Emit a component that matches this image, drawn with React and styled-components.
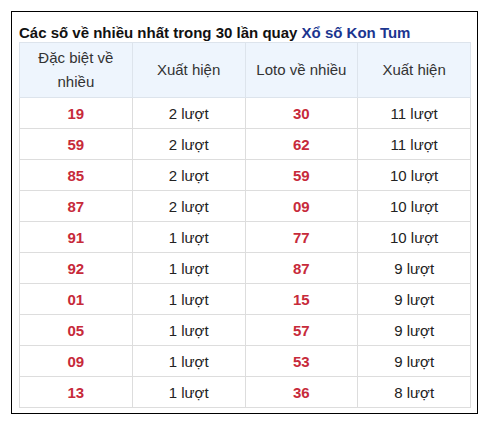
import React from "react";
import styled, { createGlobalStyle } from "styled-components";

const GlobalStyle = createGlobalStyle`
  body {
    margin: 0;
    background: #fff;
    font-family: "Liberation Sans", Arial, sans-serif;
  }
`;

const rows = [
  ["19", "2 lượt", "30", "11 lượt"],
  ["59", "2 lượt", "62", "11 lượt"],
  ["85", "2 lượt", "59", "10 lượt"],
  ["87", "2 lượt", "09", "10 lượt"],
  ["91", "1 lượt", "77", "10 lượt"],
  ["92", "1 lượt", "87", "9 lượt"],
  ["01", "1 lượt", "15", "9 lượt"],
  ["05", "1 lượt", "57", "9 lượt"],
  ["09", "1 lượt", "53", "9 lượt"],
  ["13", "1 lượt", "36", "8 lượt"],
];

const App = () => {
  return (
    <>
      <GlobalStyle />
      <StBox>
        <StTitle>
          Các số về nhiều nhất trong 30 lần quay <StLink>Xổ số Kon Tum</StLink>
        </StTitle>
        <StTable>
          <thead>
            <tr>
              <StTh>Đặc biệt về<br />nhiều</StTh>
              <StTh>Xuất hiện</StTh>
              <StTh>Loto về nhiều</StTh>
              <StTh>Xuất hiện</StTh>
            </tr>
          </thead>
          <tbody>
            {rows.map((r, i) => (
              <tr key={i}>
                <StTd $num>{r[0]}</StTd>
                <StTd>{r[1]}</StTd>
                <StTd $num>{r[2]}</StTd>
                <StTd>{r[3]}</StTd>
              </tr>
            ))}
          </tbody>
        </StTable>
      </StBox>
    </>
  );
};

export default App;

const StBox = styled.div`
  margin: 11px 0 0 11px;
  width: 467px;
  border: 1px solid #000;
  padding: 0 6px 5px 7px;
  box-sizing: border-box;
`;

const StTitle = styled.h3`
  margin: 0;
  padding: 14px 0 2px;
  font-size: 15px;
  line-height: 14px;
  font-weight: 700;
  color: #111;
`;

const StLink = styled.span`
  color: #1b3690;
`;

const StTable = styled.table`
  width: 100%;
  border-collapse: collapse;
  table-layout: fixed;
`;

const StTh = styled.th`
  height: 55px;
  padding: 2px 4px;
  box-sizing: border-box;
  background: #eef5fd;
  border: 1px solid #dde4ec;
  font-size: 15px;
  line-height: 24px;
  font-weight: 400;
  color: #333;
  text-align: center;
`;

const StTd = styled.td`
  height: 31px;
  padding: 0 4px;
  box-sizing: border-box;
  border: 1px solid #ddd;
  font-size: 15px;
  text-align: center;
  color: ${(p) => (p.$num ? "#c72a3a" : "#222")};
  font-weight: ${(p) => (p.$num ? 700 : 400)};
`;
